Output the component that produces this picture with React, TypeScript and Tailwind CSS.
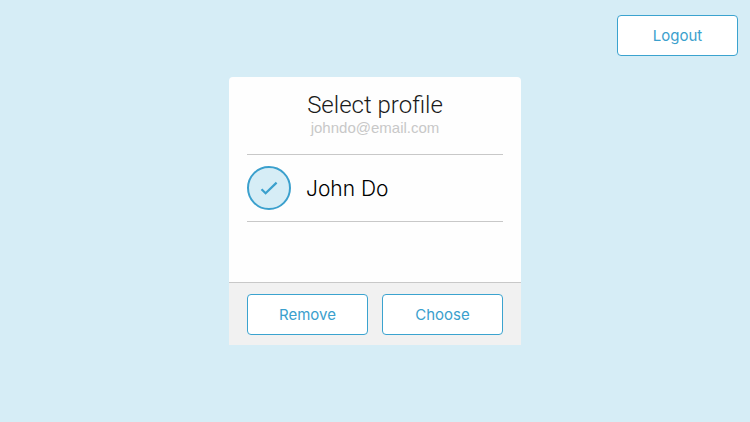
import React, { useState } from 'react';

interface Profile {
  id: string;
  name: string;
}

const EMAIL = 'johndo@email.com';

const PROFILES: Profile[] = [{ id: 'john', name: 'John Do' }];

interface OutlineButtonProps {
  children: React.ReactNode;
  className: string;
}

const OutlineButton: React.FC<OutlineButtonProps> = ({ children, className }) => (
  <button
    type="button"
    className={`h-[41px] rounded-[4px] border border-[#3ba3cf] bg-white font-['Inter',sans-serif] text-[15px] leading-5 text-[#3ba0cd] ${className}`}
  >
    {children}
  </button>
);

const App: React.FC = () => {
  const [selected, setSelected] = useState(PROFILES[0].id);

  return (
    <div className="flex min-h-screen flex-col bg-[#d6edf6] font-['Inter',sans-serif] text-[#1a1a1a]">
      <header className="flex justify-end px-3 pt-[15px]">
        <OutlineButton className="w-[121px]">Logout</OutlineButton>
      </header>

      <main className="flex justify-center px-3 pt-[21px]">
        <section className="w-full max-w-[292px] overflow-hidden rounded-t-[4px] bg-[#fefefe]">
          <div className="px-[18px] pb-[60px]">
            <div className="border-b border-[#c8c8c8] pt-[15px] pb-4 text-center">
              <h1 className="font-['Roboto',sans-serif] text-[24px] leading-[26px] font-light">Select profile</h1>
              <p className="font-['Liberation_Sans',sans-serif] text-[15px] leading-5 text-[#c8c8c8]">{EMAIL}</p>
            </div>

            {PROFILES.map(profile => (
              <label key={profile.id} className="flex h-[67px] items-center gap-[15px] border-b border-[#c8c8c8]">
                <span className="relative size-11">
                  <input
                    type="radio"
                    name="profile"
                    checked={selected === profile.id}
                    onChange={() => setSelected(profile.id)}
                    className="peer block size-11 appearance-none rounded-full border-2 border-[#3ba0cd] bg-white checked:bg-[#d6edf6]"
                  />
                  {/* Tick, only shown on the selected profile */}
                  <svg
                    viewBox="0 0 44 44"
                    fill="none"
                    aria-hidden="true"
                    className="pointer-events-none absolute inset-0 hidden size-11 peer-checked:block"
                  >
                    <path d="M14.5 23.2L18.6 27.3L29.6 16.6" stroke="#3ba0cd" strokeWidth="2.2" />
                  </svg>
                </span>
                <span className="text-[21px] leading-[25px] font-light text-black">{profile.name}</span>
              </label>
            ))}
          </div>

          <footer className="flex gap-[14px] border-t border-[#c8c8c8] bg-[#f1f1f1] px-[18px] pt-[11px] pb-[10px]">
            <OutlineButton className="flex-1">Remove</OutlineButton>
            <OutlineButton className="flex-1">Choose</OutlineButton>
          </footer>
        </section>
      </main>
    </div>
  );
};

export default App;
